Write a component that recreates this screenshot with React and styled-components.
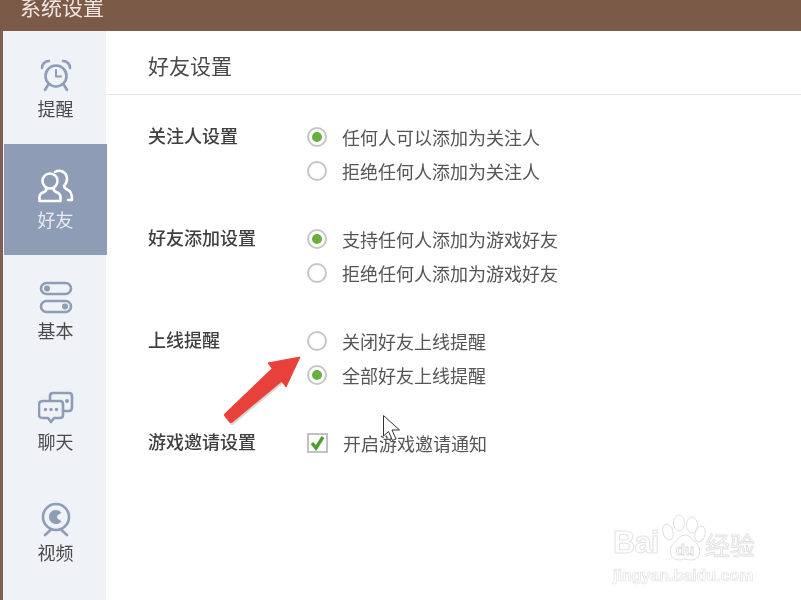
import styled, { createGlobalStyle } from "styled-components"

const GlobalStyle = createGlobalStyle`
html, body {
    margin: 0;
    background: #fff;
    overflow: hidden;
}
* {
    box-sizing: border-box;
}
`

const Page = styled.div`
position: relative;
width: 801px;
height: 600px;
overflow: hidden;
display: flex;
flex-direction: column;
background: #fff;
font-family: "Noto Sans CJK SC", "Noto Sans", sans-serif;
filter: blur(0.35px);
`

const TitleBar = styled.div`
height: 31px;
flex: none;
background: #7b5a48;
padding-left: 20px;
color: #f0e6df;
font-size: 21px;
line-height: 12px;
overflow: hidden;
`

const Body = styled.div`
flex: 1;
display: flex;
border-left: 3px solid #7d6052;
`

const Sidebar = styled.nav`
width: 103px;
flex: none;
padding-top: 2px;
background: #eff2f6;
`

const NavItem = styled.div`
height: 111px;
margin: 0 -1px 0 1px;
padding-top: 24px;
display: flex;
flex-direction: column;
align-items: center;
gap: 3px;
background: ${p => (p.$active ? "#8e9cb5" : "transparent")};
color: ${p => (p.$active ? "#e8ecf2" : "#4a4a4a")};
font-size: 18px;
line-height: 24px;
svg {
    display: block;
    width: 36px;
    height: 36px;
    fill: none;
    stroke: ${p => (p.$active ? "#fff" : "#8e9cb5")};
    stroke-width: 2.6;
    stroke-linecap: round;
    stroke-linejoin: round;
}
.solid {
    fill: ${p => (p.$active ? "#fff" : "#8e9cb5")};
    stroke: none;
}
`

const Main = styled.main`
flex: 1;
display: flex;
flex-direction: column;
`

const Header = styled.h1`
height: 64px;
margin: 0;
padding: 4px 0 0 42px;
display: flex;
align-items: center;
border-bottom: 1px solid #e5e7ea;
color: #4a4a4a;
font-size: 21px;
font-weight: 400;
`

const Settings = styled.div`
padding: 25px 0 0 42px;
display: flex;
flex-direction: column;
gap: 34px;
`

const Group = styled.section`
display: flex;
`

const GroupLabel = styled.div`
width: 159px;
height: 34px;
margin-top: -2px;
line-height: 34px;
color: #3f3f3f;
font-size: 18px;
font-weight: 500;
`

const Options = styled.div`
display: flex;
flex-direction: column;
`

const Option = styled.div`
height: 34px;
display: flex;
align-items: center;
gap: 15px;
color: #555;
font-size: 18px;
`

const Radio = styled.span`
width: 20px;
height: 20px;
flex: none;
display: flex;
align-items: center;
justify-content: center;
border: 2px solid #c6c6c6;
border-radius: 50%;
background: #fff;
&::after {
    content: "";
    display: ${p => (p.$checked ? "block" : "none")};
    width: 10px;
    height: 10px;
    border-radius: 50%;
    background: #68b03e;
}
`

const CheckBox = styled.span`
width: 21px;
height: 20px;
flex: none;
border: 2px solid #c2c2c2;
background: #fff;
svg {
    display: block;
    width: 17px;
    height: 16px;
}
`

const Arrow = styled.svg`
position: absolute;
left: 200px;
top: 340px;
width: 120px;
height: 100px;
`

const Cursor = styled.svg`
position: absolute;
left: 382px;
top: 414px;
width: 20px;
height: 30px;
`

const Watermark = styled.div`
position: absolute;
left: 613px;
top: 513px;
width: 150px;
height: 72px;
color: #fff;
-webkit-text-stroke: 1px #e3e3e3;
`

const LogoRow = styled.div`
display: flex;
align-items: flex-end;
height: 50px;
`

const LogoWord = styled.span`
width: 92px;
font-family: "Liberation Sans", sans-serif;
font-size: 31px;
font-weight: 700;
line-height: 40px;
letter-spacing: -1px;
`

const LogoCn = styled.span`
font-size: 25px;
line-height: 38px;
`

const Paw = styled.svg`
position: absolute;
left: 47px;
top: 0;
width: 50px;
height: 50px;
`

const Site = styled.div`
margin-top: 3px;
font-family: "Liberation Sans", sans-serif;
font-size: 16px;
font-weight: 700;
line-height: 20px;
-webkit-text-stroke: 0.7px #e3e3e3;
`

const AlarmIcon = () => (
    <svg viewBox="0 0 36 36">
        <circle cx="18" cy="19" r="10.5" />
        <path d="M18 13v6.5h5" strokeWidth="2" />
        <path d="M4 11c0-4 3-7 7-7M32 11c0-4-3-7-7-7" />
        <path d="M10 28l-3 5M26 28l3 5" />
    </svg>
)

const FriendsIcon = () => (
    <svg viewBox="0 0 36 36">
        <circle cx="12" cy="13" r="7.5" />
        <path d="M8 20c1 2 0 3-2 4-3 1-4.500 3-4.500 5v4h21v-4c0-2-1.500-4-4.500-5-2-1-3-2-2-4" />
        <path d="M17 4c5-3 12 0 12 7 0 3-1 5-3 7 0 2 2 3 4 4 3 1 4 4 4 10h-4" />
    </svg>
)

const ToggleIcon = () => (
    <svg viewBox="0 0 36 36">
        <rect x="3" y="4" width="30" height="11" rx="5.500" />
        <rect x="3" y="22" width="30" height="11" rx="5.500" />
        <circle className="solid" cx="9" cy="9.500" r="3" />
        <circle className="solid" cx="27" cy="27.500" r="3" />
    </svg>
)

const ChatIcon = () => (
    <svg viewBox="0 0 36 36">
        <path d="M5 11h17c2 0 3 1 3 3v11c0 2-1 3-3 3h-6l-3 4-3-4H5c-2 0-4-1-4-3V14c0-2 2-3 4-3z" />
        <path d="M12 10V6c0-2 1-3 3-3h16c2 0 3 1 3 3v11c0 2-1 4-3 4h-5" />
        <circle className="solid" cx="7.500" cy="19.500" r="1.700" />
        <circle className="solid" cx="13" cy="19.500" r="1.700" />
        <circle className="solid" cx="18.500" cy="19.500" r="1.700" />
        <circle className="solid" cx="29" cy="11" r="2" />
    </svg>
)

const CameraIcon = () => (
    <svg viewBox="0 0 36 36">
        <circle cx="18" cy="16" r="13" />
        <path className="solid" d="M18 9a7 7 0 1 0 5.500 11.300l-3.500-2.300a2.500 2.500 0 0 1 0-4l3.500-2.300A7 7 0 0 0 18 9z" />
        <path d="M7 34l5.500-5M29 34l-5.500-5" />
    </svg>
)

const navItems = [
    { label: "提醒", Icon: AlarmIcon },
    { label: "好友", Icon: FriendsIcon, active: true },
    { label: "基本", Icon: ToggleIcon },
    { label: "聊天", Icon: ChatIcon },
    { label: "视频", Icon: CameraIcon },
]

const groups = [
    {
        label: "关注人设置",
        options: [
            { text: "任何人可以添加为关注人", checked: true },
            { text: "拒绝任何人添加为关注人" },
        ],
    },
    {
        label: "好友添加设置",
        options: [
            { text: "支持任何人添加为游戏好友", checked: true },
            { text: "拒绝任何人添加为游戏好友" },
        ],
    },
    {
        label: "上线提醒",
        options: [
            { text: "关闭好友上线提醒" },
            { text: "全部好友上线提醒", checked: true },
        ],
    },
]

export default function App() {
    return (
        <Page>
            <GlobalStyle />
            <TitleBar>系统设置</TitleBar>
            <Body>
                <Sidebar>
                    {navItems.map(({ label, Icon, active }) => (
                        <NavItem key={label} $active={active}>
                            <Icon />
                            {label}
                        </NavItem>
                    ))}
                </Sidebar>
                <Main>
                    <Header>好友设置</Header>
                    <Settings>
                        {groups.map(group => (
                            <Group key={group.label}>
                                <GroupLabel>{group.label}</GroupLabel>
                                <Options>
                                    {group.options.map(option => (
                                        <Option key={option.text}>
                                            <Radio $checked={option.checked} />
                                            {option.text}
                                        </Option>
                                    ))}
                                </Options>
                            </Group>
                        ))}
                        <Group>
                            <GroupLabel>游戏邀请设置</GroupLabel>
                            <Option>
                                <CheckBox>
                                    <svg viewBox="0 0 17 16">
                                        <path d="M3 8l4 5 7-11" fill="none" stroke="#4f9e30" strokeWidth="3.400" />
                                    </svg>
                                </CheckBox>
                                开启游戏邀请通知
                            </Option>
                        </Group>
                    </Settings>
                </Main>
            </Body>
            <Arrow viewBox="0 0 120 100">
                <path d="M26 75L74 29L83 38L31 81Z" fill="rgba(90,60,60,0.22)" stroke="rgba(90,60,60,0.22)" strokeWidth="4" strokeLinejoin="round" transform="translate(1 2)" />
                <path d="M26 75L74 29L83 38L31 81Z" fill="#e8413c" stroke="#e8413c" strokeWidth="4" strokeLinejoin="round" />
                <path d="M100 17L68 23L86 47Z" fill="#e8413c" stroke="#e8413c" strokeWidth="1" strokeLinejoin="round" />
            </Arrow>
            <Cursor viewBox="0 0 20 30">
                <path d="M1.500 1.500V22L6.500 17.500L10.500 26.500L14 25L10 16H17.500Z" fill="#fff" stroke="#333" strokeWidth="1" strokeLinejoin="round" />
            </Cursor>
            <Watermark>
                <LogoRow>
                    <LogoWord>Bai</LogoWord>
                    <LogoCn>经验</LogoCn>
                </LogoRow>
                <Paw viewBox="0 0 50 50">
                    <g fill="#fff" stroke="#e0e0e0" strokeWidth="1">
                        <ellipse cx="8" cy="19" rx="5" ry="8" transform="rotate(-15 8 19)" />
                        <ellipse cx="19" cy="10" rx="5.500" ry="8" />
                        <ellipse cx="32" cy="12" rx="5.500" ry="8" />
                        <ellipse cx="40" cy="21" rx="5" ry="8" transform="rotate(15 40 21)" />
                        <path d="M25 22c-5 0-8 5-12 9-5 6-3 16 6 16 3 0 4-1 6-1s3 1 6 1c9 0 11-10 6-16-4-4-7-9-12-9z" />
                    </g>
                    <text x="25" y="42" textAnchor="middle" fontFamily="Liberation Sans" fontSize="15" fontWeight="700" fill="#fff" stroke="#d8d8d8" strokeWidth="0.8">du</text>
                </Paw>
                <Site>jingyan.baidu.com</Site>
            </Watermark>
        </Page>
    )
}
